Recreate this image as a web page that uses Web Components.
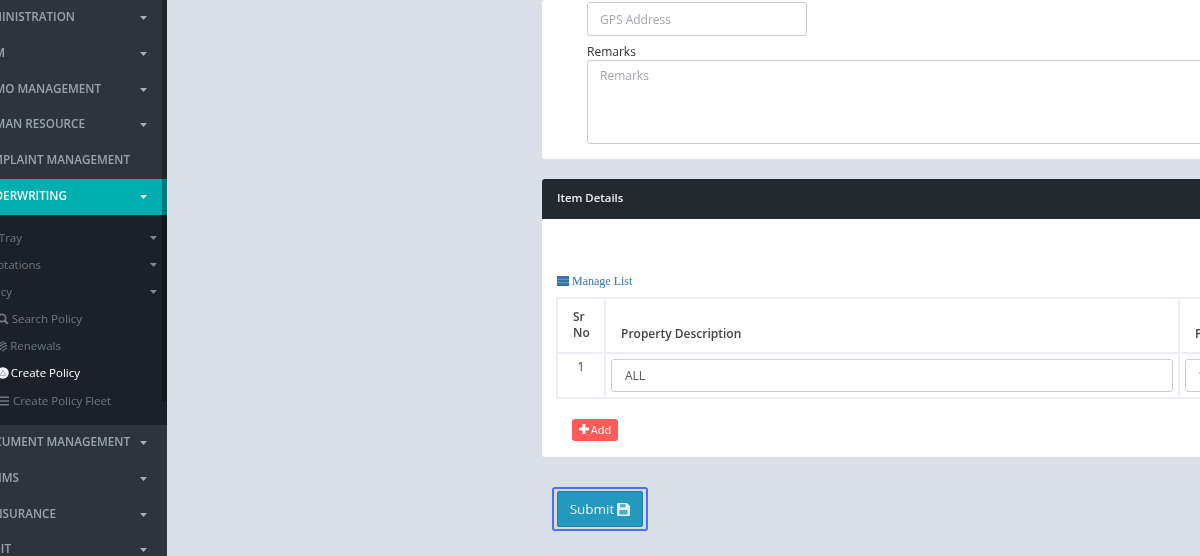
<!DOCTYPE html>
<html><head><meta charset="utf-8">
<style>
html,body{margin:0;padding:0;height:100%;overflow:hidden;background:#d9e0e8;font-family:"Open Sans",sans-serif}
</style></head><body>
<app-shell>
  <side-nav slot="nav">
    <nav-item label="ADMINISTRATION" caret></nav-item>
    <nav-item label="CRM" caret></nav-item>
    <nav-item label="PROMO MANAGEMENT" caret></nav-item>
    <nav-item label="HUMAN RESOURCE" caret></nav-item>
    <nav-item label="COMPLAINT MANAGEMENT"></nav-item>
    <nav-item label="UNDERWRITING" caret active></nav-item>
    <sub-menu>
      <sub-item label="My Tray" caret></sub-item>
      <sub-item label="Quotations" caret></sub-item>
      <sub-item label="Policy" caret></sub-item>
      <sub-item label="Search Policy" icon="search"></sub-item>
      <sub-item label="Renewals" icon="renew"></sub-item>
      <sub-item label="Create Policy" icon="create" current></sub-item>
      <sub-item label="Create Policy Fleet" icon="bars"></sub-item>
    </sub-menu>
    <nav-item label="DOCUMENT MANAGEMENT" caret></nav-item>
    <nav-item label="CLAIMS" caret></nav-item>
    <nav-item label="REINSURANCE" caret></nav-item>
    <nav-item label="AUDIT" caret></nav-item>
  </side-nav>
  <policy-form slot="main"></policy-form>
</app-shell>
<script>
const sh=(el,html)=>{el.attachShadow({mode:'open'}).innerHTML=html};
const caret='<svg width="7" height="4" viewBox="0 0 7 4" style="display:block"><path d="M0 0h7L3.500 4z" fill="currentColor"/></svg>';
const icons={
search:'<svg width="12" height="12" viewBox="0 0 12 12"><circle cx="5" cy="5" r="3.700" fill="none" stroke="currentColor" stroke-width="1.800"/><path d="M7.600 7.600l3.200 3.200" stroke="currentColor" stroke-width="2.200"/></svg>',
renew:'<svg width="12" height="12" viewBox="0 0 12 12" fill="none" stroke="currentColor" stroke-width="1.200"><path d="M1 5.500C2.500 3.500 4.500 2 7.500 1.500M1 8.500C3 5.500 6 3.700 9.500 3.200M2 11C4 8 7 6 10 5.400M5.500 11.500C6.500 9.600 8 8.500 10 8"/></svg>',
create:'<svg width="12" height="12" viewBox="0 0 12 12"><circle cx="6" cy="6" r="5.800" fill="#f4f6f8"/><path d="M6 3L8.800 8.400H3.200z" fill="none" stroke="#a9b2bb" stroke-width="1"/></svg>',
bars:'<svg width="12" height="12" viewBox="0 0 12 12"><path d="M1 2.200h11M1 6h11M1 9.800h11" stroke="currentColor" stroke-width="1.500"/></svg>'};
customElements.define('app-shell',class extends HTMLElement{constructor(){super();sh(this,`<style>
:host{display:grid;grid-template-columns:167px 1fr;height:556px;width:1200px;overflow:hidden;background:#d9e0e8;filter:blur(.35px)}
.n,.m{overflow:hidden;height:556px;min-width:0}
</style><div class="n"><slot name="nav"></slot></div><div class="m"><slot name="main"></slot></div>`)}});
customElements.define('side-nav',class extends HTMLElement{constructor(){super();sh(this,`<style>
:host{display:block;height:556px;background:#2d343c;overflow:hidden;position:relative}
.bar{position:absolute;right:0;top:0;width:5px;height:401px;background:rgba(0,0,0,.3)}
</style><slot></slot><div class="bar"></div>`)}});
customElements.define('nav-item',class extends HTMLElement{connectedCallback(){
const a=this.hasAttribute('active');
const ends={ADMINISTRATION:75,CRM:5,'PROMO MANAGEMENT':101,'HUMAN RESOURCE':85,'COMPLAINT MANAGEMENT':130,UNDERWRITING:67,'DOCUMENT MANAGEMENT':130,CLAIMS:19,REINSURANCE:56,AUDIT:11};
sh(this,`<style>
:host{display:flex;align-items:center;height:35.75px;width:167px;box-sizing:border-box;background:${a?'#00aeae':'transparent'};color:${a?'#f2f7f7':'#9ba3ab'};position:relative}
.t{font:600 11.700px/1 "Open Sans",sans-serif;white-space:nowrap;position:absolute;top:11px;right:${167-ends[this.getAttribute('label')]}px}
.c{position:absolute;left:140px;top:16px;color:${a?'#f2f7f7':'#a9b0b6'}}
</style><span class="t">${this.getAttribute('label')}</span>${this.hasAttribute('caret')?`<span class="c">${caret}</span>`:''}`);
}});
customElements.define('sub-menu',class extends HTMLElement{constructor(){super();sh(this,`<style>
:host{display:block;background:#1a2129;height:210.500px;padding-top:10px;box-sizing:border-box;width:167px}
</style><slot></slot>`)}});
customElements.define('sub-item',class extends HTMLElement{connectedCallback(){
const cur=this.hasAttribute('current'),ic=this.getAttribute('icon');
const ends={'My Tray':22,'Quotations':41,'Policy':12,'Search Policy':82,'Renewals':61,'Create Policy':80,'Create Policy Fleet':111};
sh(this,`<style>
:host{display:block;height:27.200px;width:167px;position:relative;color:${cur?'#fff':'#6f7880'}}
.t{font:400 11.500px/1 "Open Sans",sans-serif;position:absolute;top:7px;white-space:nowrap;right:${167-ends[this.getAttribute('label')]}px}
.i{position:absolute;left:-3px;top:7px;line-height:0}
.c{position:absolute;left:150px;top:11px;color:#7f878e}
</style><span class="t">${this.getAttribute('label')}</span>${ic?`<span class="i">${icons[ic]}</span>`:''}${this.hasAttribute('caret')?`<span class="c">${caret}</span>`:''}`);
}});
customElements.define('form-field',class extends HTMLElement{connectedCallback(){
const v=this.getAttribute('value'),ph=this.getAttribute('placeholder');
sh(this,`<style>
:host{display:block;box-sizing:border-box;border:1px solid #ccd0d4;border-radius:3px;background:#fff;padding:${v?9:10}px 12px 0;font:400 12px/14px "Open Sans",sans-serif;color:${v?'#555':'#a3a6aa'};height:var(--h,34px);width:var(--w,auto)}
</style>${v||ph}`)}});
customElements.define('card-box',class extends HTMLElement{constructor(){super();sh(this,`<style>
:host{display:block;background:#fff;border-radius:3px;width:720px;overflow:hidden}
</style><slot></slot>`)}});
customElements.define('policy-form',class extends HTMLElement{constructor(){super();sh(this,`<style>
:host{display:block;padding-left:375px;font-family:"Open Sans",sans-serif}
.c1{padding:2px 0 16px 45px;box-sizing:border-box;height:159px}
.lbl{font:400 12px/16px "Open Sans",sans-serif;color:#333;margin-top:8px}
.sec{margin-top:20px;height:278px}
.hd{background:#23282f;height:40px;box-sizing:border-box;padding:0 15px 3px;display:flex;align-items:center;font:600 11.400px "Open Sans",sans-serif;color:#eef1f3}
.ml{margin:54px 0 0 15px;display:flex;align-items:center;gap:3px;font:12px/16px "Liberation Serif",serif;color:#3a73a8;height:16px}
table{border-collapse:collapse;margin:8px 0 0 14px;font:400 12px/16px "Open Sans",sans-serif;color:#333;table-layout:fixed;width:700px}
td,th{border:2px solid #ebeff3;box-sizing:border-box}
th{font-weight:600;text-align:left;vertical-align:bottom;padding:5px 15px 10px;color:#444}
th.sr{padding-bottom:11px}
td{vertical-align:top;padding:5px}
.no{text-align:center;color:#444;padding-top:5px}
.add{margin:20px 0 0 30px;width:46px;height:22px;padding-bottom:2px;border-radius:3px;background:#ff5b57;color:#fff;display:flex;align-items:center;justify-content:center;gap:2px;font:400 11px "Open Sans",sans-serif;box-sizing:border-box}
.foot{margin:30px 0 0 10px;width:96px;height:44px;box-sizing:border-box;border:2px solid #4f6ff5;border-radius:3px;padding:2px 3px;background:#d5dbe0}
.sub{height:100%;background:#2499bd;border-radius:2px;border:1px solid #1f7f9e;box-sizing:border-box;display:flex;align-items:center;justify-content:center;gap:3px;color:#e4f4f8;font:400 13.500px "Open Sans",sans-serif}
</style>
<card-box><div class="c1">
<form-field placeholder="GPS Address" style="--w:220px"></form-field>
<div class="lbl">Remarks</div>
<form-field placeholder="Remarks" style="--h:84px;padding-top:8px"></form-field>
</div></card-box>
<card-box class="sec">
<div class="hd">Item Details</div>
<div class="ml"><svg width="12" height="10" viewBox="0 0 12 10"><path d="M0 0h12v10H0z" fill="#3a73a8"/><path d="M0 3.300h12M0 6.700h12" stroke="#8fb3d2" stroke-width=".6"/></svg>Manage List</div>
<table><colgroup><col style="width:48px"><col style="width:574px"><col></colgroup>
<tr style="height:55px"><th class="sr">Sr<br>No</th><th>Property Description</th><th>Property</th></tr>
<tr style="height:45px"><td class="no">1</td><td><form-field value="ALL" style="--h:33px;padding-left:13px"></form-field></td><td><form-field value="1" style="--h:33px"></form-field></td></tr>
</table>
<div class="add"><svg width="10" height="10" viewBox="0 0 10 10"><path d="M3.600 0h2.800v3.600H10v2.800H6.400V10H3.600V6.400H0V3.600h3.600z" fill="#fff"/></svg>Add</div>
</card-box>
<div class="foot"><div class="sub">Submit<svg width="13" height="13" viewBox="0 0 13 13"><path d="M1.200 0H10l3 3v8.800a1.200 1.200 0 0 1-1.200 1.200H1.200A1.200 1.200 0 0 1 0 11.800V1.200A1.200 1.200 0 0 1 1.200 0z" fill="#dff1f6"/><path d="M3 1.200h5.500v3H3zM2.500 7h8v4.600h-8z" fill="#2499bd" fill-opacity=".8"/></svg></div></div>`)}});
</script>
</body></html>
